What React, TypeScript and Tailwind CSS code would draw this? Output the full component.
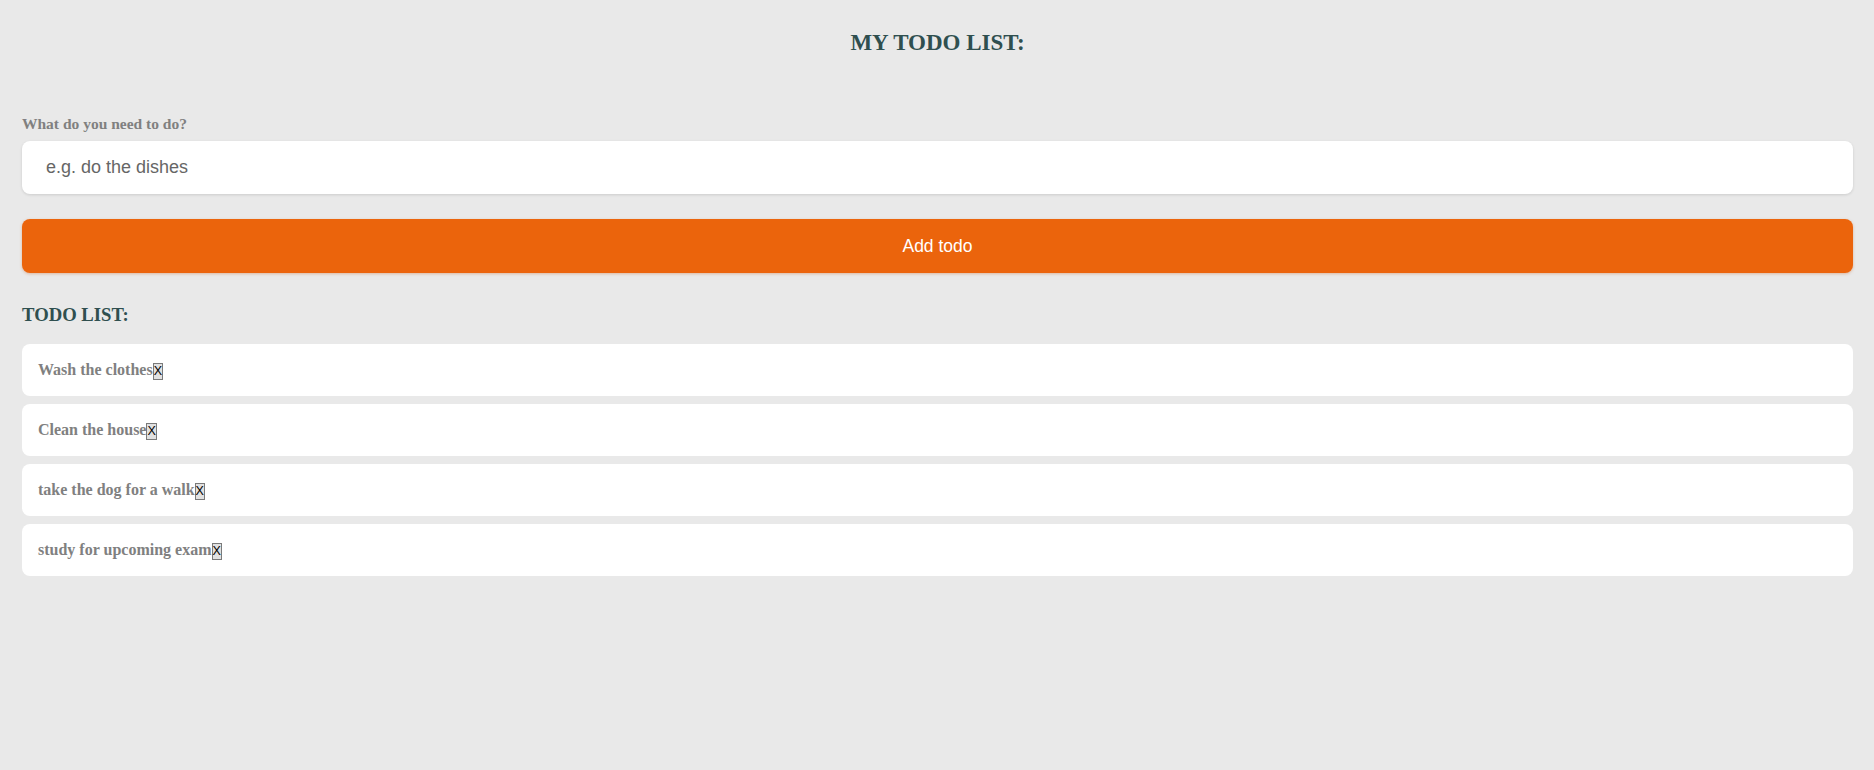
import React, { useState } from "react";

const serif = { fontFamily: '"Liberation Serif", "Times New Roman", serif' };

export default function App() {
  const [text, setText] = useState("");
  const [todos, setTodos] = useState<string[]>([
    "Wash the clothes",
    "Clean the house",
    "take the dog for a walk",
    "study for upcoming exam",
  ]);

  const addTodo = () => {
    if (!text.trim()) return;
    setTodos((prev) => [...prev, text.trim()]);
    setText("");
  };

  const removeTodo = (i: number) => {
    setTodos((prev) => prev.filter((_, idx) => idx !== i));
  };

  return (
    <div className="min-h-screen bg-[#e9e9e9] pl-[22px] pr-[21px] pt-[31px] font-['Liberation_Sans',Arial,sans-serif]">
      <h1
        style={serif}
        className="text-center text-[23px] leading-none font-bold text-[#2f4f4f]"
      >
        MY TODO LIST:
      </h1>

      <label
        style={serif}
        className="block mt-[62px] text-[15.5px] leading-none font-bold text-[#808080]"
      >
        What do you need to do?
      </label>
      <input
        type="text"
        value={text}
        onChange={(e) => setText(e.target.value)}
        placeholder="e.g. do the dishes"
        className="block w-full mt-[9.5px] h-[53px] bg-white rounded-lg px-6 text-[18px] text-[#333] placeholder:text-[#666] shadow-[0_1px_3px_rgba(0,0,0,0.12)] outline-none"
      />
      <button
        onClick={addTodo}
        className="block w-full mt-[25px] h-[54px] bg-[#eb640c] rounded-lg text-white text-[17.5px] shadow-[0_1px_3px_rgba(200,90,20,0.35)] cursor-pointer"
      >
        Add todo
      </button>

      <h3
        style={serif}
        className="mt-[33px] text-[18.7px] leading-none font-bold text-[#2f4f4f]"
      >
        TODO LIST:
      </h3>

      <ul className="mt-[19.3px] flex flex-col gap-2">
        {todos.map((todo, i) => (
          <li
            key={i}
            style={serif}
            className="h-[52px] bg-white rounded-lg pl-4 pt-[18px] text-[16px] leading-none"
          >
            <span className="font-bold text-[#808080]">{todo}</span>
            <button
              onClick={() => removeTodo(i)}
              className="inline-block align-baseline bg-[#e1e1e1] border border-[#7a7a7a] text-black text-[12.5px] leading-[15px] px-0 font-['Liberation_Sans',Arial,sans-serif]"
            >
              X
            </button>
          </li>
        ))}
      </ul>
    </div>
  );
}
